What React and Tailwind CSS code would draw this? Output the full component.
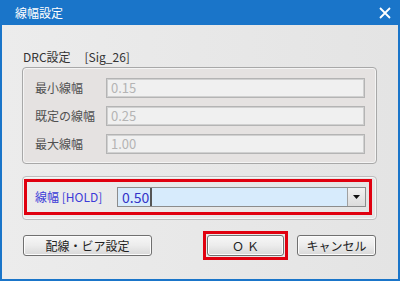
export default function App() {
  const font = { fontFamily: '"Noto Sans CJK JP", "Noto Sans", sans-serif' }
  const rows = [
    ['最小線幅', '0.15'],
    ['既定の線幅', '0.25'],
    ['最大線幅', '1.00'],
  ]

  const btn =
    'h-[21px] flex items-center justify-center rounded-[3px] border border-[#707070] bg-gradient-to-b from-[#f7f7f7] via-[#ececec] to-[#d8d8d8] text-[12px] text-[#222] shadow-[inset_0_0_0_1px_#fcfcfc]'

  return (
    <div className="w-[400px] h-[281px] bg-[#1a75c9] flex flex-col px-[2px] pb-[2px]" style={font}>
      {/* title bar */}
      <div className="h-[25px] flex items-center justify-between pl-[13px] pr-[7px] text-white">
        <span className="text-[12px] leading-none">線幅設定</span>
        <svg width="12" height="12" viewBox="0 0 12 12">
          <path d="M1 1 L11 11 M11 1 L1 11" stroke="white" strokeWidth="1.8" />
        </svg>
      </div>

      {/* body */}
      <div className="flex-1 bg-gradient-to-r from-[#ececec] to-[#e4e4e4] pl-[20px] pr-[21px] pt-[24px]">
        <div className="h-[16px] leading-[16px] pl-[1px] text-[12px] text-[#333] flex">
          <span>DRC設定</span>
          <span className="ml-[14px]">[Sig_26]</span>
        </div>

        {/* DRC group */}
        <div className="mt-[2px] h-[97px] rounded-[4px] border border-[#a8a8a8] bg-[#e5e2e1] pl-[12px] pr-[11px] pt-[10px] flex flex-col gap-[8px] shadow-[inset_0_0_0_1px_#f4f4f4]">
          {rows.map(([label, value]) => (
            <div key={label} className="flex items-center h-[20px]">
              <span className="w-[71px] text-[12px] text-[#505050]">{label}</span>
              <div className="flex-1 h-[20px] flex items-center pl-[4px] bg-[#f0f0f0] border border-[#b4b4b4] shadow-[inset_0_0_0_1px_#d0d0d0] text-[13px] text-[#b4b4b4]">
                {value}
              </div>
            </div>
          ))}
        </div>

        {/* HOLD group */}
        <div className="mt-[12px] h-[44px] rounded-[4px] border border-[#bdbdbd] pl-[1px] pr-[4px] pt-[2px] pb-[4px] shadow-[inset_0_0_0_1px_#f6f6f6]">
          <div className="h-full border-[3px] border-[#e0000f] flex items-center pl-[8px] pr-[3px]">
            <span className="w-[82px] text-[12px] text-[#3c3cd8]">線幅 [HOLD]</span>
            <div className="flex-1 h-[20px] flex border border-[#8c8c8c] bg-[#d7ebfc]">
              <div className="flex-1 flex items-center pl-[4px] text-[14px] text-[#3434c8]">
                0.50
                <span className="ml-[1px] w-[2px] h-[18px] bg-[#555]" />
              </div>
              <div className="w-[18px] flex items-center justify-center border-l border-[#a0a0a0] bg-gradient-to-b from-[#f2f2f2] to-[#dcdcdc]">
                <svg width="7" height="4" viewBox="0 0 7 4">
                  <path d="M0 0 L7 0 L3.5 4 Z" fill="#111" />
                </svg>
              </div>
            </div>
          </div>
        </div>

        {/* buttons */}
        <div className="mt-[11px] h-[29px] flex items-center pl-[1px] pr-[1px]">
          <button className={`${btn} w-[129px]`}>配線・ビア設定</button>
          <div className="ml-auto border-[3px] border-[#e0000f] p-[1px]">
            <button className={`${btn} w-[77px] text-[11px] tracking-[3px] pl-[3px]`}>ＯＫ</button>
          </div>
          <button className={`${btn} ml-[9px] w-[79px]`}>キャンセル</button>
        </div>
      </div>
    </div>
  )
}
